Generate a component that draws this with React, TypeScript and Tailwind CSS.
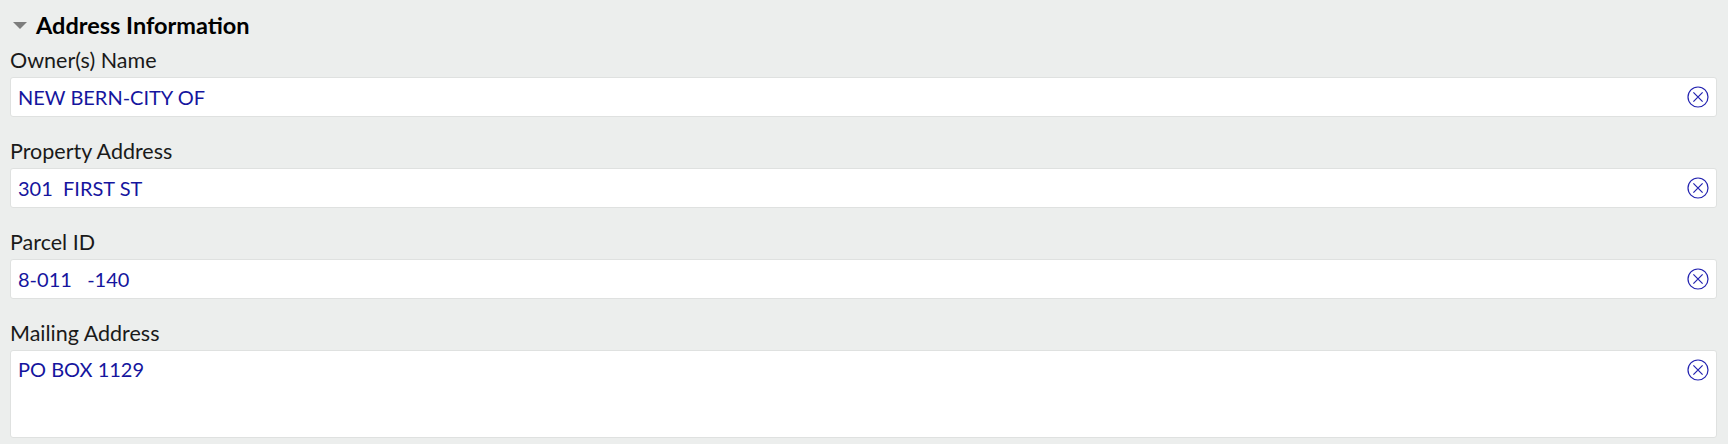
import React from "react";

const ClearIcon = ({ className = "" }: { className?: string }) => (
  <svg viewBox="0 0 22 22" className={`h-[22px] w-[22px] shrink-0 text-[#2323b0] ${className}`} fill="none" stroke="currentColor">
    <circle cx="11" cy="11" r="10" strokeWidth="1.2" />
    <path d="M6.4 6.4l9.2 9.2M15.6 6.4l-9.2 9.2" strokeWidth="1.2" />
  </svg>
);

function Field({ label, value, tall }: { label: string; value: string; tall?: boolean }) {
  return (
    <div className="flex flex-col">
      <label className="h-[31px] pt-[1px] text-[21.5px] leading-[26px] text-[#1a1a1a]">{label}</label>
      <div
        className={`flex justify-between rounded-[3px] border border-[#dfe1e0] bg-white pl-[7px] pr-[7px] ${
          tall ? "h-[88px] items-start pt-[5px]" : "h-[40px] items-center"
        }`}
      >
        <span className={`whitespace-pre text-[20px] leading-[26px] text-[#15159e] ${tall ? "" : "-mt-[1px]"}`}>{value}</span>
        <ClearIcon className={tall ? "mt-[3px]" : ""} />
      </div>
    </div>
  );
}

export default function App() {
  return (
    <div className="flex h-[444px] w-full flex-col gap-[20px] overflow-hidden bg-[#eceeed] pl-[10px] pr-[11px] font-['Lato','Noto_Sans',sans-serif]">
      <div className="flex flex-col">
        <div className="flex h-[46px] items-center gap-[9px] pl-[3px] pt-[4px]">
          <span className="h-0 w-0 border-x-[7px] border-t-[7px] border-x-transparent border-t-[#7d7d7d]" />
          <h2 className="text-[23.5px] font-bold leading-[26px] text-black">Address Information</h2>
        </div>
        <Field label="Owner(s) Name" value="NEW BERN-CITY OF" />
      </div>
      <Field label="Property Address" value="301  FIRST ST" />
      <Field label="Parcel ID" value="8-011   -140" />
      <Field label="Mailing Address" value="PO BOX 1129" tall />
    </div>
  );
}
